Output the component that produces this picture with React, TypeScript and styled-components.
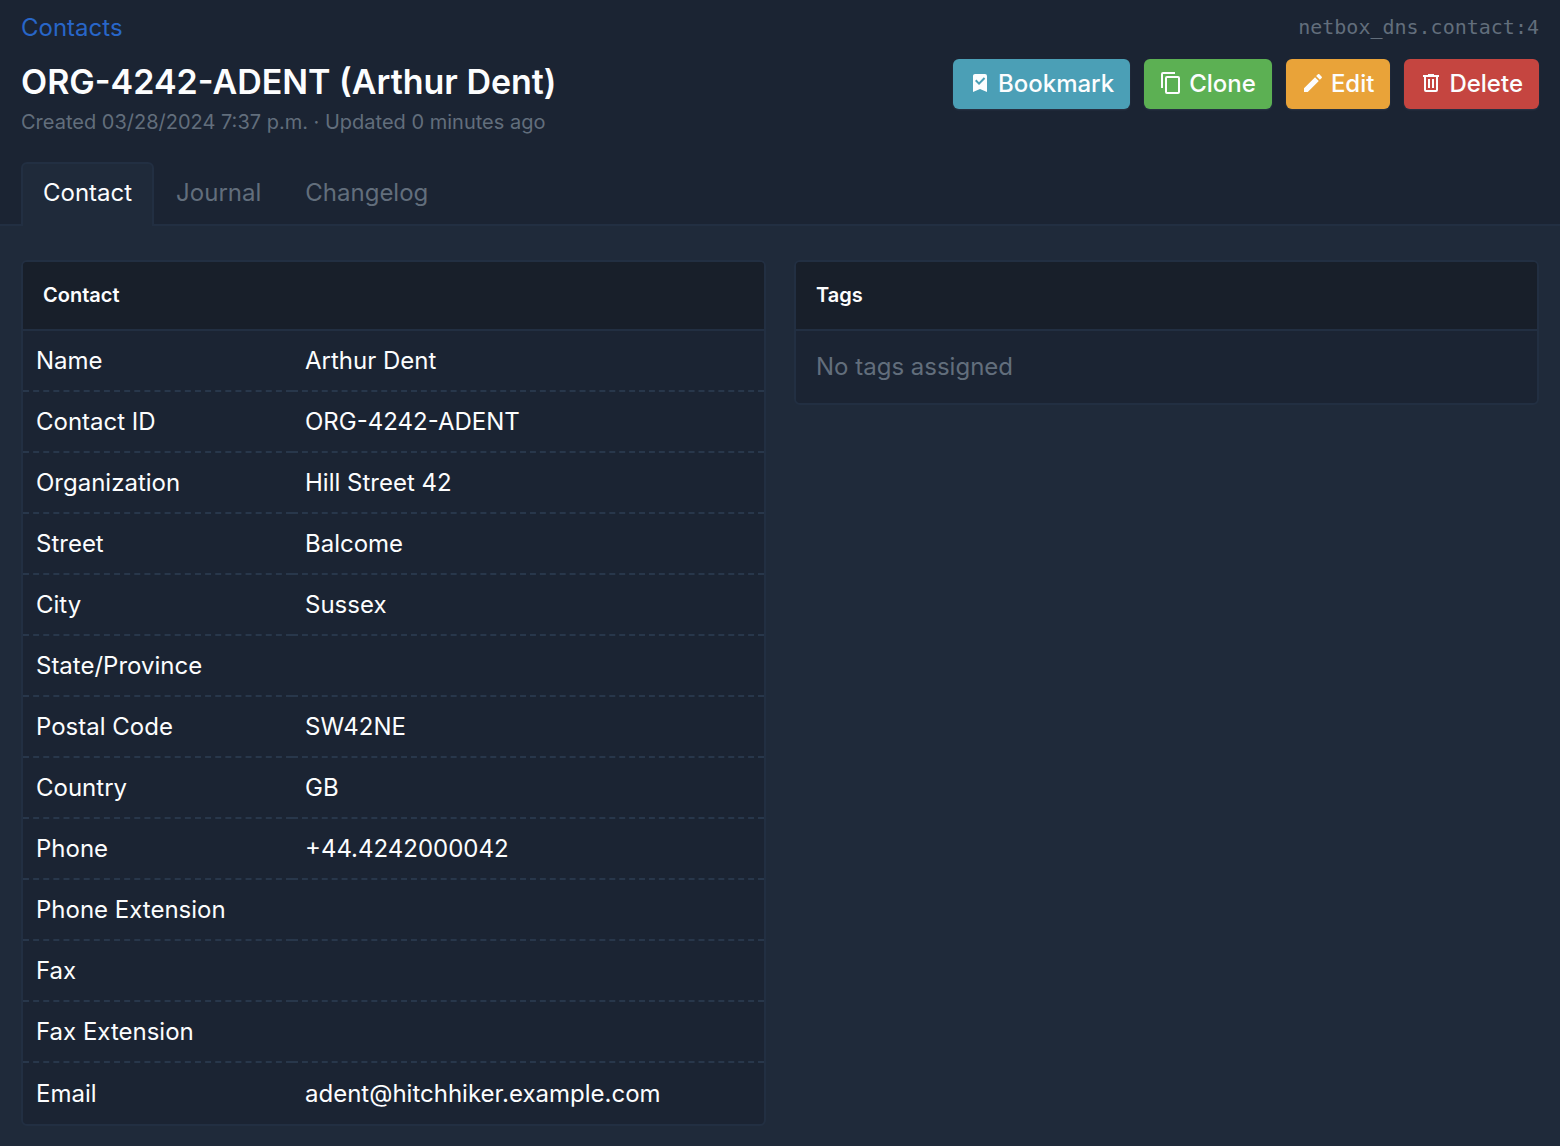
import React from "react";
import styled, { createGlobalStyle } from "styled-components";

const colors = {
  page: "#1f2a3a",
  surface: "#1b2433",
  cardHeader: "#181f2a",
  border: "#222f42",
  dash: "#28374b",
  text: "#fcfdfe",
  muted: "#626e7c",
  link: "#2866c8",
};

const GlobalStyle = createGlobalStyle`
  *, *::before, *::after { box-sizing: border-box; }
  body {
    margin: 0;
    background: ${colors.page};
    color: ${colors.text};
    font-family: Inter, "Liberation Sans", sans-serif;
    font-size: 24px;
    line-height: 34px;
    font-optical-sizing: none;
  }
`;

const Header = styled.header`
  background: ${colors.surface};
  border-bottom: 2px solid ${colors.border};
`;

const TopRow = styled.div`
  display: flex;
  justify-content: space-between;
  padding: 11px 21px 0;
`;

const Crumb = styled.a`
  color: ${colors.link};
  text-decoration: none;
`;

const ObjectId = styled.code`
  color: ${colors.muted};
  font-family: "DejaVu Sans Mono", monospace;
  font-size: 20px;
  line-height: 32px;
`;

const TitleRow = styled.div`
  display: flex;
  justify-content: space-between;
  align-items: flex-start;
  padding: 14px 21px 0;
`;

const Title = styled.h1`
  margin: 0;
  font-size: 34px;
  line-height: 46px;
  font-weight: 600;
`;

const Meta = styled.p`
  margin: 3px 0 0;
  color: ${colors.muted};
  font-size: 20px;
  line-height: 28px;
`;

const Actions = styled.div`
  display: flex;
  gap: 14px;
`;

const ActionButton = styled.button<{ $tone: string }>`
  display: flex;
  align-items: center;
  gap: 6px;
  height: 50px;
  padding: 0 16px 0 15px;
  border: 0;
  border-radius: 6px;
  background: ${(p) => p.$tone};
  color: ${colors.text};
  font: inherit;
  font-weight: 500;
  box-shadow: 0 1px 2px rgba(160, 190, 220, 0.12);
  cursor: pointer;
`;

const Icon = styled.svg`
  width: 24px;
  height: 24px;
  margin-bottom: 2px;
  fill: currentColor;
`;

const Tabs = styled.nav`
  display: flex;
  padding: 26px 21px 0;
  margin-bottom: -2px;
`;

const Tab = styled.a<{ $active?: boolean }>`
  padding: 12px 20px 16px;
  border: 2px solid ${(p) => (p.$active ? colors.border : "transparent")};
  border-bottom: 0;
  border-radius: 6px 6px 0 0;
  background: ${(p) => (p.$active ? colors.page : "transparent")};
  color: ${(p) => (p.$active ? colors.text : colors.muted)};
  text-decoration: none;
`;

const Main = styled.main`
  display: grid;
  grid-template-columns: 1fr 1fr;
  align-items: start;
  gap: 28px;
  padding: 34px 21px 20px;
`;

const Card = styled.section`
  border: 2px solid ${colors.border};
  border-radius: 6px;
  background: ${colors.surface};
  overflow: hidden;
`;

const CardTitle = styled.h2`
  margin: 0;
  padding: 17px 20px 18px;
  border-bottom: 2px solid ${colors.border};
  background: ${colors.cardHeader};
  font-size: 20px;
  line-height: 32px;
  font-weight: 600;
`;

const CardBody = styled.div`
  padding: 19px 20px;
  color: ${colors.muted};
`;

const Table = styled.table`
  width: 100%;
  border-collapse: separate;
  border-spacing: 0;
  table-layout: fixed;

  th, td {
    height: 61px;
    padding: 0 13px;
    font-weight: 400;
    text-align: left;
    border-bottom: 2px dashed ${colors.dash};
  }
  th { width: 269px; }
  tr:last-child > * { border-bottom: 0; }
`;

const actions = [
  {
    label: "Bookmark",
    tone: "#4b9fb6",
    path: "M17,3A2,2 0 0,1 19,5V21L12,18L5,21V5C5,3.89 5.9,3 7,3H17M11,14L17.25,7.76L15.84,6.34L11,11.18L8.41,8.59L7,10L11,14Z",
  },
  {
    label: "Clone",
    tone: "#5cb053",
    path: "M19,21H8V7H19M19,5H8A2,2 0 0,0 6,7V21A2,2 0 0,0 8,23H19A2,2 0 0,0 21,21V7A2,2 0 0,0 19,5M16,1H4A2,2 0 0,0 2,3V17H4V3H16V1Z",
  },
  {
    label: "Edit",
    tone: "#e9a339",
    path: "M20.71,7.04C21.1,6.65 21.1,6 20.71,5.63L18.37,3.29C18,2.9 17.35,2.9 16.96,3.29L15.12,5.12L18.87,8.87M3,17.25V21H6.75L17.81,9.93L14.06,6.18L3,17.25Z",
  },
  {
    label: "Delete",
    tone: "#c54540",
    path: "M9,3V4H4V6H5V19A2,2 0 0,0 7,21H17A2,2 0 0,0 19,19V6H20V4H15V3H9M7,6H17V19H7V6M9,8H11V17H9V8M13,8H15V17H13V8Z",
  },
];

const fields: [string, string][] = [
  ["Name", "Arthur Dent"],
  ["Contact ID", "ORG-4242-ADENT"],
  ["Organization", "Hill Street 42"],
  ["Street", "Balcome"],
  ["City", "Sussex"],
  ["State/Province", ""],
  ["Postal Code", "SW42NE"],
  ["Country", "GB"],
  ["Phone", "+44.4242000042"],
  ["Phone Extension", ""],
  ["Fax", ""],
  ["Fax Extension", ""],
  ["Email", "adent@hitchhiker.example.com"],
];

export default function App() {
  return (
    <>
      <GlobalStyle />
      <Header>
        <TopRow>
          <Crumb href="#contacts">Contacts</Crumb>
          <ObjectId>netbox_dns.contact:4</ObjectId>
        </TopRow>
        <TitleRow>
          <div>
            <Title>ORG-4242-ADENT (Arthur Dent)</Title>
            <Meta>Created 03/28/2024 7:37 p.m. · Updated 0 minutes ago</Meta>
          </div>
          <Actions>
            {actions.map((a) => (
              <ActionButton key={a.label} type="button" $tone={a.tone}>
                <Icon viewBox="0 0 24 24" aria-hidden="true">
                  <path d={a.path} />
                </Icon>
                {a.label}
              </ActionButton>
            ))}
          </Actions>
        </TitleRow>
        <Tabs>
          <Tab href="#contact" $active aria-current="page">Contact</Tab>
          <Tab href="#journal">Journal</Tab>
          <Tab href="#changelog">Changelog</Tab>
        </Tabs>
      </Header>
      <Main>
        <Card>
          <CardTitle>Contact</CardTitle>
          <Table>
            <tbody>
              {fields.map(([name, value]) => (
                <tr key={name}>
                  <th scope="row">{name}</th>
                  <td>{value}</td>
                </tr>
              ))}
            </tbody>
          </Table>
        </Card>
        <Card>
          <CardTitle>Tags</CardTitle>
          <CardBody>No tags assigned</CardBody>
        </Card>
      </Main>
    </>
  );
}
